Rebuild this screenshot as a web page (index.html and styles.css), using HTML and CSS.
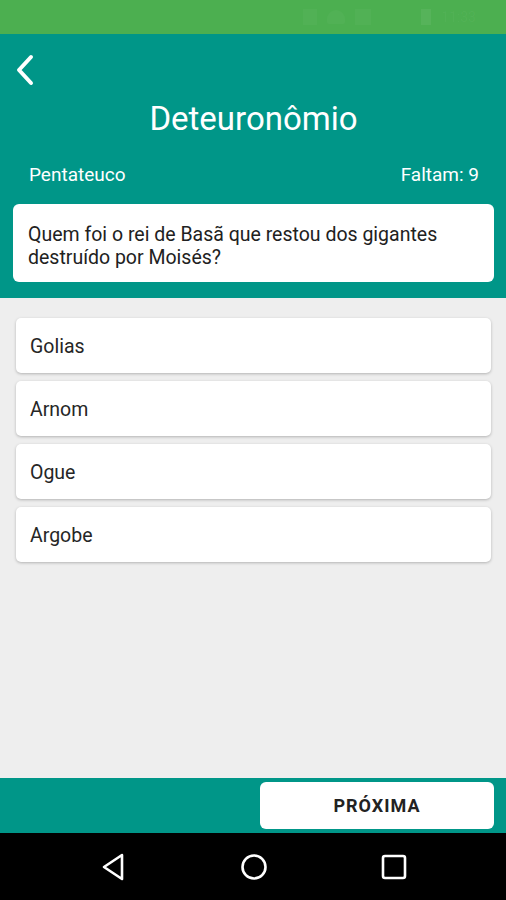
FILE: index.html
```html
<!DOCTYPE html>
<html lang="pt">
<head>
    <meta charset="UTF-8">
    <meta name="viewport" content="width=device-width, initial-scale=1.0">
    <title>Deteuronômio</title>
    <link rel="stylesheet" href="styles.css">
</head>
<body>
    <div id="screen">
        <div class="status-bar">
            <span class="sb-icon sb-sim"></span>
            <span class="sb-icon sb-wifi"></span>
            <span class="sb-icon sb-signal"></span>
            <span class="sb-icon sb-battery"></span>
            <span class="sb-time">11:33</span>
        </div>

        <div class="header">
            <button class="back-btn" type="button">
                <svg width="22" height="32" viewBox="0 0 22 32">
                    <path d="M17 3 L5 16 L17 29" fill="none" stroke="#fff" stroke-width="4" stroke-linecap="round" stroke-linejoin="round"/>
                </svg>
            </button>
            <h1 class="title">Deteuronômio</h1>
            <div class="meta">
                <span>Pentateuco</span>
                <span>Faltam: 9</span>
            </div>
            <div class="question">
                Quem foi o rei de Basã que restou dos gigantes destruído por Moisés?
            </div>
        </div>

        <div class="options">
            <div class="option">Golias</div>
            <div class="option">Arnom</div>
            <div class="option">Ogue</div>
            <div class="option">Argobe</div>
        </div>

        <div class="footer">
            <button class="next-btn" type="button">PRÓXIMA</button>
        </div>

        <div class="nav-bar">
            <svg width="26" height="30" viewBox="0 0 26 30">
                <path d="M22 3 L4 15 L22 27 Z" fill="none" stroke="#fff" stroke-width="2.6" stroke-linejoin="round"/>
            </svg>
            <svg width="28" height="28" viewBox="0 0 28 28">
                <circle cx="14" cy="14" r="11.5" fill="none" stroke="#fff" stroke-width="2.6"/>
            </svg>
            <svg width="26" height="26" viewBox="0 0 26 26">
                <rect x="2" y="2" width="22" height="22" rx="2" fill="none" stroke="#fff" stroke-width="2.6"/>
            </svg>
        </div>
    </div>
</body>
</html>
```

FILE: styles.css
```css
body {
    margin: 0;
    padding: 0;
    font-family: Roboto, "Noto Sans", Arial, sans-serif;
    background-color: #eeeeee;
}

#screen {
    width: 506px;
    height: 900px;
    display: flex;
    flex-direction: column;
    background-color: #eeeeee;
}

.status-bar {
    height: 34px;
    flex-shrink: 0;
    background-color: #4caf50;
    display: flex;
    align-items: center;
    justify-content: flex-end;
    padding-right: 30px;
    gap: 10px;
    box-sizing: border-box;
}

.sb-icon {
    display: inline-block;
    background-color: rgba(255, 255, 255, 0.03);
}

.sb-sim {
    width: 14px;
    height: 16px;
}

.sb-wifi {
    width: 18px;
    height: 14px;
    border-radius: 9px 9px 2px 2px;
}

.sb-signal {
    width: 16px;
    height: 16px;
    margin-right: 40px;
}

.sb-battery {
    width: 10px;
    height: 16px;
    background-color: rgba(255, 255, 255, 0.06);
}

.sb-time {
    font-size: 14px;
    color: rgba(255, 255, 255, 0.04);
}

.header {
    background-color: #009688;
    height: 264px;
    flex-shrink: 0;
    padding: 0 12px 0 13px;
    box-sizing: border-box;
    display: flex;
    flex-direction: column;
}

.back-btn {
    background: none;
    border: none;
    padding: 0;
    margin: 20px 0 0 1px;
    width: 22px;
    height: 32px;
    cursor: pointer;
}

.back-btn svg {
    display: block;
}

.title {
    margin: 13px 0 0;
    text-align: center;
    color: #fff;
    font-size: 33px;
    font-weight: 400;
    line-height: 40px;
}

.meta {
    display: flex;
    justify-content: space-between;
    color: #fff;
    font-size: 19px;
    line-height: 24px;
    margin: 24px 15px 0 16px;
}

.question {
    margin-top: 17px;
    background-color: #fff;
    border-radius: 6px;
    padding: 19px 15px 10px;
    color: #212121;
    font-size: 19.5px;
    line-height: 23px;
    height: 78px;
    box-sizing: border-box;
}

.options {
    flex: 1;
    display: flex;
    flex-direction: column;
    gap: 8px;
    padding: 20px 15px 0 16px;
}

.option {
    background-color: #fff;
    border-radius: 5px;
    height: 55px;
    box-sizing: border-box;
    padding: 2px 14px 0;
    display: flex;
    align-items: center;
    color: #262626;
    font-size: 19.5px;
    box-shadow: 0 1px 3px rgba(0, 0, 0, 0.25);
}

.footer {
    height: 55px;
    flex-shrink: 0;
    background-color: #009688;
    display: flex;
    justify-content: flex-end;
    align-items: center;
    padding-right: 12px;
}

.next-btn {
    width: 234px;
    height: 47px;
    background-color: #fff;
    border: none;
    border-radius: 6px;
    font-family: Roboto, Arial, sans-serif;
    font-size: 18px;
    font-weight: 700;
    color: #222;
    letter-spacing: 1px;
    cursor: pointer;
}

.nav-bar {
    height: 67px;
    flex-shrink: 0;
    background-color: #000;
    display: flex;
    justify-content: space-between;
    align-items: center;
    padding: 0 99px 0 100px;
}

.nav-bar svg {
    display: block;
}
```
